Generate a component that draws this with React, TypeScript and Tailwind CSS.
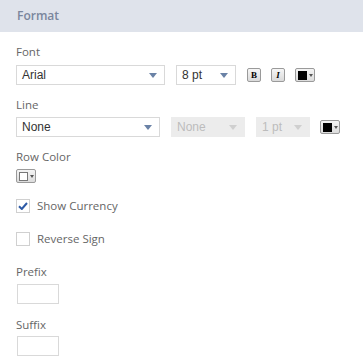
import React from "react";

const label = "h-[14px] leading-[14px] text-[11.5px] text-[#666]";

function Arrow({ color = "#6a82a6" }: { color?: string }) {
  return (
    <svg width="8" height="5" viewBox="0 0 8 5">
      <path d="M0 0 H8 L4 5 Z" fill={color} />
    </svg>
  );
}

function Select({
  value,
  width,
  disabled,
}: {
  value: string;
  width: string;
  disabled?: boolean;
}) {
  return (
    <div
      className={`${width} h-[20px] flex items-center justify-between pl-[5px] pr-[7px] text-[12px] font-['Liberation_Sans',sans-serif] ${
        disabled
          ? "bg-[#ececec] text-[#bcbcbc] border border-[#ececec]"
          : "bg-white text-[#333] border border-[#d9d9d9]"
      }`}
    >
      <span>{value}</span>
      <Arrow color={disabled ? "#cfcfcf" : "#6a82a6"} />
    </div>
  );
}

function ColorButton({ fill }: { fill: "black" | "white" }) {
  return (
    <div className="w-[20px] h-[14px] rounded-[2px] border border-[#9a9a9a] bg-gradient-to-b from-[#f4f4f4] to-[#dcdcdc] flex items-center pl-[2px] gap-[1px]">
      {fill === "black" ? (
        <div className="w-[9px] h-[9px] bg-black" />
      ) : (
        <div className="w-[9px] h-[9px] bg-white border border-[#777]" />
      )}
      <svg width="4" height="3" viewBox="0 0 4 3" className="ml-[1px]">
        <path d="M0 0 H4 L2 3 Z" fill="#555" />
      </svg>
    </div>
  );
}

function StyleButton({ children, italic }: { children: string; italic?: boolean }) {
  return (
    <div
      className={`w-[14px] h-[14px] rounded-[2px] border border-[#9a9a9a] bg-gradient-to-b from-[#f6f6f6] to-[#dadada] flex items-center justify-center text-[9px] font-bold leading-none text-black font-['Liberation_Serif',serif] ${
        italic ? "italic" : ""
      }`}
    >
      {children}
    </div>
  );
}

function Checkbox({ checked, text }: { checked: boolean; text: string }) {
  return (
    <div className="flex items-center h-[14px]">
      <div className="w-[14px] h-[14px] border border-[#d0d0d0] bg-white flex items-center justify-center">
        {checked && (
          <svg width="10" height="8" viewBox="0 0 10 8">
            <path d="M1 4.2 L3.8 7 L9 1" stroke="#2d5aa6" strokeWidth="2" fill="none" />
          </svg>
        )}
      </div>
      <span className="ml-[7px] text-[11.5px] text-[#666]">{text}</span>
    </div>
  );
}

export default function App() {
  return (
    <div className="w-[363px] h-[358px] bg-white font-['Open_Sans',sans-serif] overflow-hidden">
      <div className="h-[32px] bg-[#dfe3eb] flex items-center pl-[17px] text-[12px] font-semibold text-[#7a869c]">
        Format
      </div>
      <div className="px-[16px] flex flex-col">
        <div className={`${label} mt-[13px]`}>Font</div>
        <div className="mt-[6px] flex items-center">
          <Select value="Arial" width="w-[149px]" />
          <div className="ml-[11px]">
            <Select value="8 pt" width="w-[60px]" />
          </div>
          <div className="ml-[11px]">
            <StyleButton>B</StyleButton>
          </div>
          <div className="ml-[10px]">
            <StyleButton italic>I</StyleButton>
          </div>
          <div className="ml-[10px]">
            <ColorButton fill="black" />
          </div>
        </div>

        <div className={`${label} mt-[13px]`}>Line</div>
        <div className="mt-[5px] flex items-center">
          <Select value="None" width="w-[144px]" />
          <div className="ml-[11px]">
            <Select value="None" width="w-[74px]" disabled />
          </div>
          <div className="ml-[11px]">
            <Select value="1 pt" width="w-[54px]" disabled />
          </div>
          <div className="ml-[10px]">
            <ColorButton fill="black" />
          </div>
        </div>

        <div className={`${label} mt-[13px]`}>Row Color</div>
        <div className="mt-[5px]">
          <ColorButton fill="white" />
        </div>

        <div className="mt-[16px]">
          <Checkbox checked text="Show Currency" />
        </div>
        <div className="mt-[19px]">
          <Checkbox checked={false} text="Reverse Sign" />
        </div>

        <div className={`${label} mt-[19px]`}>Prefix</div>
        <div className="mt-[5px] w-[42px] h-[20px] border border-[#d9d9d9] bg-white ml-[1px]" />

        <div className={`${label} mt-[14px]`}>Suffix</div>
        <div className="mt-[4px] w-[42px] h-[20px] border border-[#d9d9d9] bg-white ml-[1px]" />
      </div>
    </div>
  );
}
